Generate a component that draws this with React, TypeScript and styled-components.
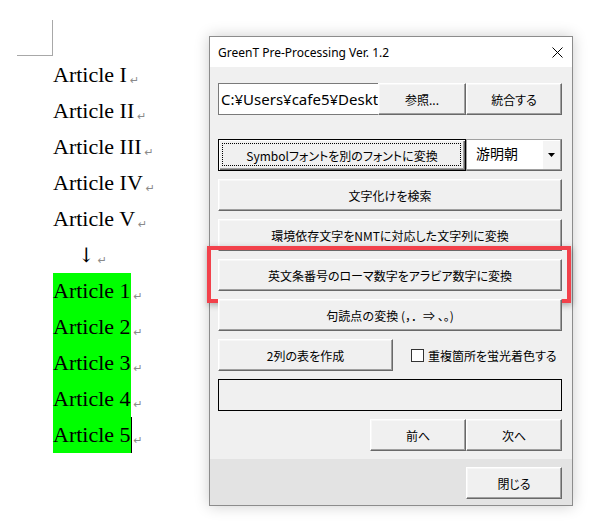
import React from "react";
import styled, { createGlobalStyle, css } from "styled-components";

const GlobalStyle = createGlobalStyle`
  html, body {
    margin: 0;
    padding: 0;
    background: #ffffff;
  }
  body {
    width: 607px;
    height: 529px;
    overflow: hidden;
  }
`;

const ui = `"Noto Sans CJK JP", "Noto Sans", sans-serif`;

const Page = styled.div`
  display: flex;
  align-items: flex-start;
  width: 607px;
  height: 529px;
`;

/* ---------- word document side ---------- */

const Doc = styled.div`
  width: 209px;
  flex-shrink: 0;
`;

const CornerMark = styled.div`
  margin: 20px 0 0 17px;
  width: 35px;
  height: 35px;
  border-right: 1px solid #a8a8a8;
  border-bottom: 1px solid #a8a8a8;
`;

const Lines = styled.div`
  margin: 1px 0 0 53px;
`;

const Line = styled.div<{ $indent?: number }>`
  height: 36px;
  line-height: 36px;
  font-family: "Liberation Serif", serif;
  font-size: 22px;
  color: #000;
  white-space: nowrap;
  padding-left: ${(p) => p.$indent ?? 0}px;
`;

const Text = styled.span<{ $green?: boolean; $caret?: boolean }>`
  display: inline-block;
  height: 36px;
  ${(p) =>
    p.$green &&
    css`
      background: #00ff00;
    `}
  ${(p) =>
    p.$caret &&
    css`
      box-shadow: 1px 0 0 #000;
    `}
`;

const Arrow = styled.span`
  display: inline-block;
  height: 36px;
  font-family: "DejaVu Serif", serif;
  font-size: 20px;
  font-weight: 300;
`;

const ReturnMark = styled.span`
  font-family: "DejaVu Sans", sans-serif;
  font-size: 11px;
  color: #8a8a8a;
  margin-left: 3px;
  vertical-align: -2px;
`;

/* ---------- dialog window ---------- */

const Window = styled.div`
  margin-top: 36px;
  width: 362px;
  height: 468px;
  border: 1px solid #8c8c8c;
  background: #f0f0f0;
  box-shadow: 0 0 14px rgba(0, 0, 0, 0.2);
  display: flex;
  flex-direction: column;
`;

const TitleBar = styled.div`
  height: 30px;
  background: #ffffff;
  display: flex;
  align-items: center;
  justify-content: space-between;
  padding: 0 9px 0 8px;
  font-family: "Noto Sans", sans-serif;
  font-size: 12px;
  color: #000;
`;

const Body = styled.div`
  flex: 1;
  padding: 16px 10px 0 8px;
  display: flex;
  flex-direction: column;
`;

const Row = styled.div<{ $gap?: number }>`
  display: flex;
  align-items: center;
  height: 32px;
  margin-bottom: ${(p) => p.$gap ?? 8}px;
`;

const Button = styled.button<{ $w?: number; $default?: boolean; $wide?: boolean }>`
  box-sizing: border-box;
  height: 32px;
  width: ${(p) => (p.$w ? `${p.$w}px` : "100%")};
  flex-shrink: 0;
  margin: 0;
  padding: 0;
  background: #f0f0f0;
  border: 1px solid;
  border-color: #ffffff #696969 #696969 #ffffff;
  box-shadow: inset -1px -1px 0 #a0a0a0, inset 1px 1px 0 #f7f7f7;
  font-family: ${ui};
  font-feature-settings: ${(p) => (p.$wide ? "normal" : `"palt"`)};
  font-size: 12px;
  color: #000;
  white-space: pre;
  position: relative;
  ${(p) =>
    p.$default &&
    css`
      border: 1px solid #000;
      box-shadow: inset 1px 1px 0 #ffffff, inset -1px -1px 0 #696969,
        inset -2px -2px 0 #a0a0a0;
      &::after {
        content: "";
        position: absolute;
        inset: 3px 4px 4px 3px;
        border: 1px dotted #000;
      }
    `}
`;

const PathInput = styled.div`
  box-sizing: border-box;
  width: 160px;
  height: 32px;
  flex-shrink: 0;
  background: #ffffff;
  border: 1px solid #7a7a7a;
  border-right: none;
  padding-left: 2px;
  overflow: hidden;
  white-space: nowrap;
  font-family: "Noto Sans", sans-serif;
  font-size: 15px;
  line-height: 30px;
  color: #000;
`;

const Combo = styled.div`
  box-sizing: border-box;
  width: 96px;
  height: 32px;
  flex-shrink: 0;
  display: flex;
  background: #ffffff;
  border: 1px solid;
  border-color: #a0a0a0 #696969 #696969 #a0a0a0;
  box-shadow: inset -1px -1px 0 #a0a0a0;
`;

const ComboText = styled.div`
  flex: 1;
  padding-left: 9px;
  font-family: ${ui};
  font-size: 14px;
  line-height: 26px;
  color: #000;
`;

const ComboArrow = styled.div`
  width: 17px;
  display: flex;
  align-items: center;
  justify-content: center;
  background: #f4f4f4;
  margin: 1px 1px 1px 0;
`;

const HighlightWrap = styled.div`
  position: relative;
  width: 100%;
  height: 32px;
`;

const Highlight = styled.div`
  position: absolute;
  top: -13px;
  left: -11px;
  right: -9px;
  bottom: -12px;
  border: 4px solid #f2414b;
  box-shadow: 1px 2px 6px rgba(0, 0, 0, 0.3);
  pointer-events: none;
`;

const CheckLabel = styled.label`
  display: flex;
  align-items: center;
  gap: 4px;
  margin-left: 18px;
  font-family: ${ui};
  font-feature-settings: "palt";
  font-size: 12px;
  color: #000;
`;

const CheckBox = styled.span`
  box-sizing: border-box;
  width: 13px;
  height: 13px;
  background: #ffffff;
  border: 1px solid #333;
`;

const MessageBox = styled.div`
  box-sizing: border-box;
  width: 100%;
  height: 32px;
  border: 1px solid #000;
  background: #f0f0f0;
`;

const RightRow = styled(Row)`
  justify-content: flex-end;
`;

const Footer = styled.div`
  height: 46px;
  background: #e3e3e3;
  display: flex;
  justify-content: flex-end;
  padding: 8px 10px 0 0;
  box-sizing: border-box;
`;

const CloseIcon = () => (
  <svg width="11" height="11" viewBox="0 0 11 11">
    <path d="M0.5 0.5 L10.5 10.5 M10.5 0.5 L0.5 10.5" stroke="#000" strokeWidth="1" />
  </svg>
);

const DropArrow = () => (
  <svg width="7" height="4" viewBox="0 0 7 4">
    <path d="M0 0 H7 L3.5 4 Z" fill="#000" />
  </svg>
);

const romans = ["I", "II", "III", "IV", "V"];

const App = () => {
  return (
    <Page>
      <GlobalStyle />
      <Doc>
        <CornerMark />
        <Lines>
          {romans.map((r) => (
            <Line key={r}>
              <Text>Article {r}</Text>
              <ReturnMark>↵</ReturnMark>
            </Line>
          ))}
          <Line $indent={25}>
            <Arrow>↓</Arrow>
            <ReturnMark>↵</ReturnMark>
          </Line>
          {[1, 2, 3, 4, 5].map((n) => (
            <Line key={n}>
              <Text $green $caret={n === 5}>
                Article {n}
              </Text>
              <ReturnMark>↵</ReturnMark>
            </Line>
          ))}
        </Lines>
      </Doc>

      <Window>
        <TitleBar>
          <span>GreenT Pre-Processing Ver. 1.2</span>
          <CloseIcon />
        </TitleBar>
        <Body>
          <Row $gap={24}>
            <PathInput>C:¥Users¥cafe5¥Deskt</PathInput>
            <Button $w={88}>参照...</Button>
            <Button $w={96}>統合する</Button>
          </Row>
          <Row>
            <Button $w={248} $default>
              Symbolフォントを別のフォントに変換
            </Button>
            <Combo>
              <ComboText>游明朝</ComboText>
              <ComboArrow>
                <DropArrow />
              </ComboArrow>
            </Combo>
          </Row>
          <Row>
            <Button>文字化けを検索</Button>
          </Row>
          <Row>
            <Button>環境依存文字をNMTに対応した文字列に変換</Button>
          </Row>
          <Row>
            <HighlightWrap>
              <Button>英文条番号のローマ数字をアラビア数字に変換</Button>
              <Highlight />
            </HighlightWrap>
          </Row>
          <Row>
            <Button $wide>句読点の変換 (，．⇒ 、。)</Button>
          </Row>
          <Row>
            <Button $w={175}>2列の表を作成</Button>
            <CheckLabel>
              <CheckBox />
              重複箇所を蛍光着色する
            </CheckLabel>
          </Row>
          <Row>
            <MessageBox />
          </Row>
          <RightRow>
            <Button $w={96}>前へ</Button>
            <Button $w={96}>次へ</Button>
          </RightRow>
        </Body>
        <Footer>
          <Button $w={96}>閉じる</Button>
        </Footer>
      </Window>
    </Page>
  );
};

export default App;
